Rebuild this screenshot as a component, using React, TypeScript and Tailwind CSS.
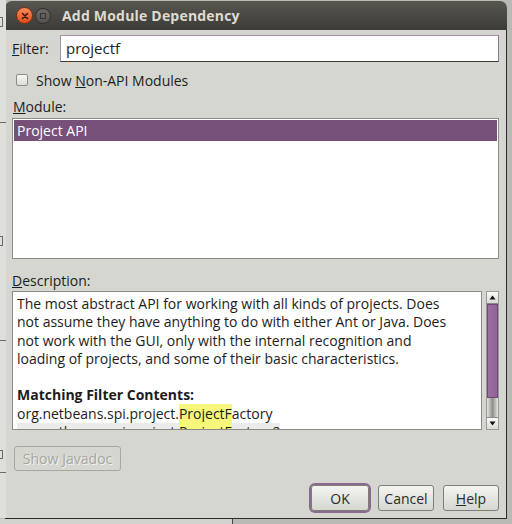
import React from 'react';

const font = { fontFamily: '"Open Sans", "DejaVu Sans", sans-serif' };

const descLines = [
  'The most abstract API for working with all kinds of projects. Does',
  'not assume they have anything to do with either Ant or Java. Does',
  'not work with the GUI, only with the internal recognition and',
  'loading of projects, and some of their basic characteristics.',
];

const Btn: React.FC<{ children: React.ReactNode; w: string; focus?: boolean }> = ({ children, w, focus }) => (
  <div className={`${w} h-[26px] rounded-[4px] ${focus ? 'ring-2 ring-[#8a6a8e]' : ''}`}>
    <div className="h-full w-full flex items-center justify-center rounded-[3px] border border-[#7e7e79] bg-gradient-to-b from-[#f4f4f1] to-[#d7d7d1] text-[14px] text-[#2a2a2a]">
      {children}
    </div>
  </div>
);

export default function App() {
  return (
    <div className="relative w-[512px] h-[524px] overflow-hidden bg-[#b9b9b5]" style={font}>
      {/* background app bits */}
      <div className="absolute left-0 top-0 w-[6px] h-[518px] bg-[#dededa]">
        <div className="absolute left-0 top-[17px] w-[3px] h-[10px] border border-l-0 border-[#6a6a66]" />
        <div className="absolute left-0 top-[122px] w-[6px] h-px bg-[#6a6a66]" />
        <div className="absolute left-0 top-[236px] w-[3px] h-[10px] border border-l-0 border-[#6a6a66]" />
        <div className="absolute left-0 top-[340px] w-[6px] h-px bg-[#6a6a66]" />
        <div className="absolute left-0 top-[450px] w-[3px] h-[9px] border border-l-0 border-[#6a6a66]" />
        <div className="absolute left-0 top-[472px] w-[6px] h-px bg-[#6a6a66]" />
      </div>
      <div className="absolute left-[232px] top-[519px] w-px h-[5px] bg-[#444]" />
      <div className="absolute left-0 top-[519px] w-[232px] h-[5px] bg-[#d2d2ce]" />

      <div className="ml-[5px] mt-px w-[502px] h-[518px] flex flex-col">
        {/* title bar */}
        <div className="h-[29px] rounded-t-[7px] bg-gradient-to-b from-[#57564f] to-[#3c3b37] flex items-center shrink-0">
          <div className="ml-[11px] w-[17px] h-[17px] rounded-full bg-gradient-to-b from-[#f98a5a] to-[#df4a16] border border-[#7a2f10] flex items-center justify-center">
            <svg width="8" height="8" viewBox="0 0 8 8">
              <path d="M1.5 1.5 L6.5 6.5 M6.5 1.5 L1.5 6.5" stroke="#3c1a0c" strokeWidth="1.6" strokeLinecap="round" />
            </svg>
          </div>
          <div className="ml-[2px] w-[16px] h-[16px] rounded-full bg-gradient-to-b from-[#6a6964] to-[#55544f] border border-[#2f2e2b] flex items-center justify-center">
            <div className="w-[6px] h-[6px] border border-[#35342f]" />
          </div>
          <span className="ml-[11px] text-[14px] font-bold text-[#dfdbd2] tracking-[0.2px]">Add Module Dependency</span>
        </div>

        {/* body */}
        <div className="flex-1 bg-[#d5d6d0] border-l border-r border-b border-[#2c2c2a] pl-[6px] pr-[7px] text-[14px] text-[#1c1c1c] flex flex-col">
          <div className="mt-[5px] flex items-center h-[27px]">
            <span className="w-[48px]"><span className="underline">F</span>ilter:</span>
            <div className="flex-1 h-[27px] border border-[#a58fa7] border-b-[#3a3a3a] border-r-[#8a7a8c] bg-white flex items-center pl-[5px] text-[15px]">
              projectf
            </div>
          </div>

          <div className="mt-[10px] flex items-center h-[16px]">
            <div className="ml-[4px] w-[12px] h-[12px] rounded-[2px] border border-[#8c8c88] bg-gradient-to-b from-[#f6f6f4] to-[#dcdcd8]" />
            <span className="ml-[8px]">Show <span className="underline">N</span>on-API Modules</span>
          </div>

          <div className="mt-[10px] h-[18px] leading-[18px] pl-px"><span className="underline">M</span>odule:</div>

          <div className="mt-[2px] h-[141px] border border-[#8a8a86] bg-white p-px">
            <div className="h-[21px] bg-[#77507a] text-white flex items-center pl-[3px]">Project API</div>
          </div>

          <div className="mt-[13px] h-[18px] leading-[18px]"><span className="underline">D</span>escription:</div>

          <div className="mt-px h-[139px] flex">
            <div className="w-[470px] h-full border border-[#8a8a86] bg-white overflow-hidden pl-[4px] pt-[3px] leading-[18.3px] whitespace-nowrap">
              {descLines.map((l) => (
                <div key={l}>{l}</div>
              ))}
              <div className="h-[18.3px]" />
              <div className="font-bold">Matching Filter Contents:</div>
              <div>
                org.netbeans.spi.project.<span className="bg-[#f7f77c]">ProjectF</span>actory
              </div>
              <div className="inline-block bg-[#ebebea]">
                org.netbeans.spi.project.<span className="bg-[#f7f77c]">ProjectF</span>actory2
              </div>
            </div>
            <div className="ml-[4px] w-[13px] h-full flex flex-col border border-[#9a9a96] bg-[#c8c8c3]">
              <div className="h-[12px] bg-gradient-to-b from-[#fafaf8] to-[#dadad5] border-b border-[#8a8a86] flex items-center justify-center">
                <svg width="7" height="5" viewBox="0 0 7 5"><path d="M3.5 0.5 L6.5 4.5 L0.5 4.5 Z" fill="#111" /></svg>
              </div>
              <div className="h-[94px] bg-gradient-to-r from-[#9c6ea3] to-[#8e6395] border border-[#6e4a74]" />
              <div className="flex-1 bg-gradient-to-r from-[#e6e6e2] via-[#8f8f8b] to-[#e6e6e2]" />
              <div className="h-[12px] bg-gradient-to-b from-[#fafaf8] to-[#dadad5] border-t border-[#8a8a86] flex items-center justify-center">
                <svg width="7" height="5" viewBox="0 0 7 5"><path d="M0.5 0.5 L6.5 0.5 L3.5 4.5 Z" fill="#111" /></svg>
              </div>
            </div>
          </div>

          <div className="mt-[16px] ml-[2px] w-[107px] h-[25px] rounded-[3px] border border-[#a8a8a3] flex items-center justify-center text-[#a6a6a1] [text-shadow:1px_1px_0_#f2f2ef]">
            Show <span className="underline ml-[4px]">J</span>avadoc
          </div>

          <div className="mt-[14px] flex justify-end gap-[9px]">
            <Btn w="w-[58px]" focus>OK</Btn>
            <Btn w="w-[56px]">Cancel</Btn>
            <Btn w="w-[56px]"><span className="underline">H</span>elp</Btn>
          </div>
        </div>
      </div>
    </div>
  );
}
